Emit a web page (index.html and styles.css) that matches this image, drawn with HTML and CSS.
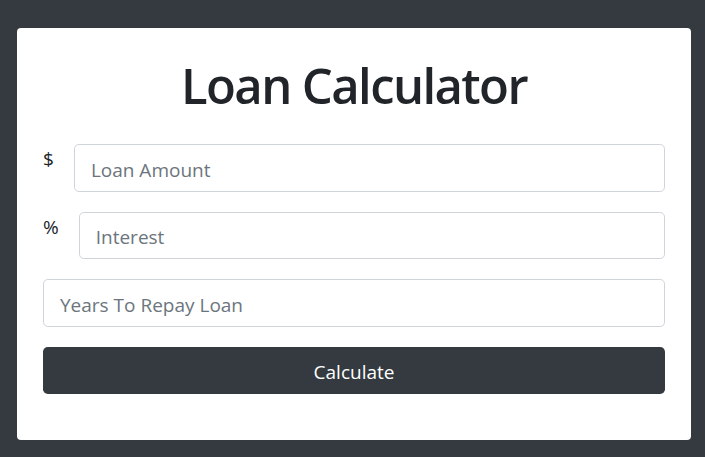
FILE: index.html
```html
<!DOCTYPE html>
<html lang="en">
<head>
<meta charset="utf-8">
<title>Loan Calculator</title>
<link rel="stylesheet" href="styles.css">
</head>
<body>
  <div class="card">
    <h1 class="title">Loan Calculator</h1>
    <form class="form">
      <div class="row">
        <span class="unit">$</span>
        <input class="field" type="number" placeholder="Loan Amount">
      </div>
      <div class="row">
        <span class="unit">%</span>
        <input class="field" type="number" placeholder="Interest">
      </div>
      <div class="row">
        <input class="field" type="number" placeholder="Years To Repay Loan">
      </div>
      <button class="btn" type="button">Calculate</button>
    </form>
  </div>
</body>
</html>
```

FILE: styles.css
```css
* { box-sizing: border-box; }
html, body {
  margin: 0;
  padding: 0;
  background: #343a40;
  font-family: "Open Sans", "Noto Sans", sans-serif;
  color: #212529;
}
body {
  padding: 28px 14px 0 17px;
  height: 457px;
  overflow: hidden;
}
.card {
  background: #fff;
  border-radius: 4px;
  padding: 26px 26px 46px;
  width: 674px;
}
.title {
  margin: 0 0 28px;
  font-size: 49px;
  font-weight: 600;
  line-height: 62px;
  text-align: center;
  letter-spacing: -1.6px;
}
.form {
  display: flex;
  flex-direction: column;
  gap: 20px;
}
.row {
  display: flex;
  align-items: flex-start;
  gap: 20px;
}
.unit {
  font-size: 19px;
  line-height: 30px;
}
.field {
  flex: 1;
  min-width: 0;
  height: 47.5px;
  padding: 10px 16px 6px;
  font-family: inherit;
  font-size: 19px;
  color: #495057;
  border: 1px solid #ced4da;
  border-radius: 4.8px;
  outline: none;
  background: #fff;
}
.field::placeholder { color: #6c757d; }
.btn {
  height: 47px;
  padding: 3px 0 0;
  border: none;
  border-radius: 4.8px;
  background: #343a40;
  color: #fff;
  font-family: inherit;
  font-size: 19px;
}
```
